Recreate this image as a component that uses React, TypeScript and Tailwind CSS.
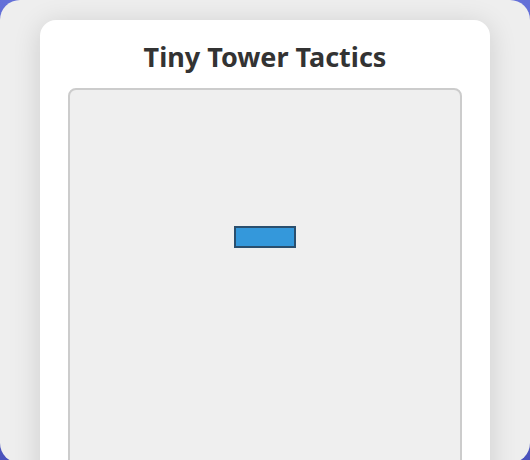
import React from 'react';

// Falling block on the game board
const Block = () => (
  <div className="absolute left-[164px] top-[136px] h-[22px] w-[62px] border-2 border-[#2a4f6e] bg-[#3498db]" />
);

const App = () => {
  return (
    <div className="h-[460px] w-full overflow-hidden bg-gradient-to-b from-[#6470d8] to-[#4a52bc]">
      <div className="h-[463px] w-full overflow-hidden rounded-[20px] bg-[#eeeeee] pt-5">
        <div
          className="mx-10 flex h-[480px] flex-col items-center rounded-2xl bg-white shadow-[0_4px_28px_rgba(0,0,0,0.14)]"
          style={{ fontFamily: '"Noto Sans", "Open Sans", sans-serif' }}
        >
          <h1 className="mt-[18px] text-[27px] font-bold leading-[37px] text-[#333]">Tiny Tower Tactics</h1>
          <div className="relative mt-[13px] h-[400px] w-[394px] rounded-lg border-2 border-[#cccccc] bg-[#efefef]">
            <Block />
          </div>
        </div>
      </div>
    </div>
  );
};

export default App;
